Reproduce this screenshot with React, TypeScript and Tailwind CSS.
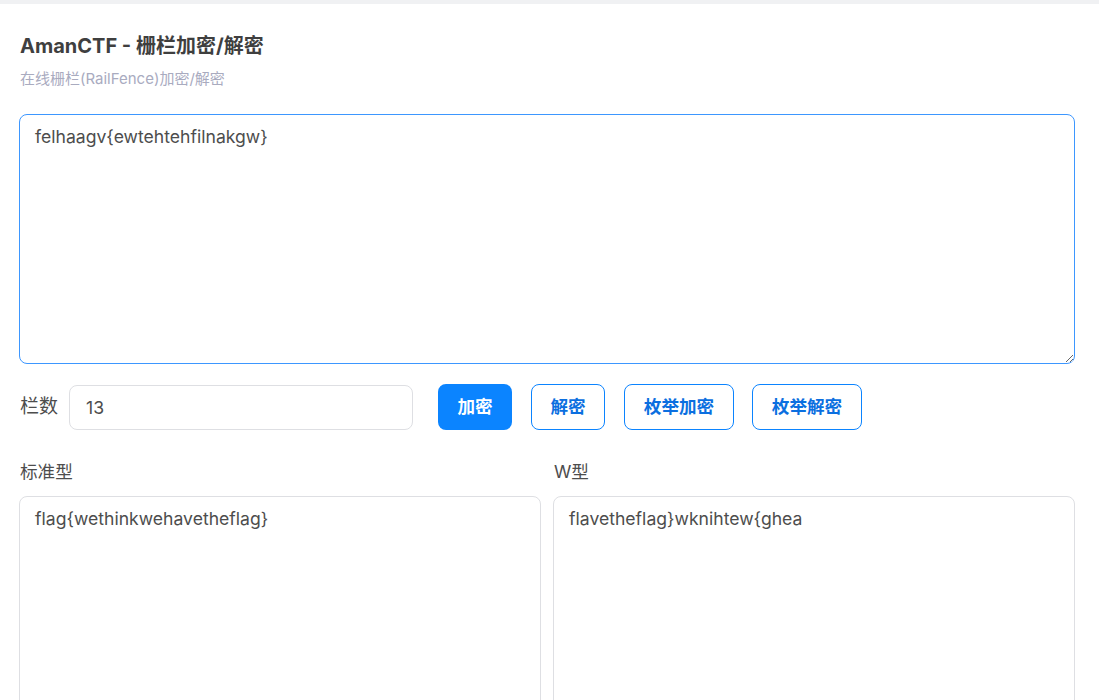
import React, { useState } from "react";

const FONT = { fontFamily: 'Inter, "Noto Sans CJK SC", sans-serif' };

export default function App() {
    const [input, setInput] = useState("felhaagv{ewtehtehfilnakgw}");
    const [rails, setRails] = useState("13");
    const [standard, setStandard] = useState("flag{wethinkwehavetheflag}");
    const [wType, setWType] = useState("flavetheflag}wknihtew{ghea");

    return (
        <div className="min-h-[700px] bg-white" style={FONT}>
            <div className="h-[4px] w-full bg-[#f0f1f3]" />
            <main className="flex flex-col pl-[19px] pr-[24px] pt-[27px]">
                <h1 className="pl-px text-[20px] leading-[30px] font-bold text-[#3f3f3f]">
                    AmanCTF - 栅栏加密/解密
                </h1>
                <p className="mt-[7px] pl-px text-[15px] leading-[22px] text-[#a9abbf]">
                    在线栅栏(RailFence)加密/解密
                </p>

                <textarea
                    value={input}
                    onChange={(e) => setInput(e.target.value)}
                    className="mt-[24px] h-[250px] w-full rounded-lg border border-[#3d97ff] px-[15px] pt-[9px] text-[17.6px] leading-[26px] text-[#4d4d4d] outline-none"
                />

                {/* controls row */}
                <div className="mt-[20px] flex items-center">
                    <span className="pl-px text-[19px] text-[#4d4d4d]">栏数</span>
                    <input
                        value={rails}
                        onChange={(e) => setRails(e.target.value)}
                        className="ml-[11px] h-[45px] w-[344px] rounded-lg border border-[#dedfe3] px-[16px] text-[17.6px] text-[#4d4d4d] outline-none"
                    />
                    <div className="ml-[25px] flex">
                        <button className="h-[46px] w-[74px] rounded-lg bg-[#0b84ff] text-[17.6px] font-bold text-white">
                            加密
                        </button>
                        <button className="ml-[19px] h-[46px] w-[74px] rounded-lg border border-[#0b84ff] bg-white text-[17.6px] font-bold text-[#0b6fe0]">
                            解密
                        </button>
                        <button className="ml-[19px] h-[46px] w-[110px] rounded-lg border border-[#0b84ff] bg-white text-[17.6px] font-bold text-[#0b6fe0]">
                            枚举加密
                        </button>
                        <button className="ml-[18px] h-[46px] w-[110px] rounded-lg border border-[#0b84ff] bg-white text-[17.6px] font-bold text-[#0b6fe0]">
                            枚举解密
                        </button>
                    </div>
                </div>

                {/* results */}
                <div className="mt-[29px] grid grid-cols-2 gap-[12px]">
                    <div className="flex flex-col">
                        <span className="pl-px text-[17.6px] leading-[26px] text-[#4d4d4d]">标准型</span>
                        <textarea
                            value={standard}
                            onChange={(e) => setStandard(e.target.value)}
                            className="mt-[11px] h-[249px] w-full rounded-lg border border-[#dedfe3] px-[15px] pt-[9px] text-[17.6px] leading-[26px] text-[#4d4d4d] outline-none"
                        />
                    </div>
                    <div className="flex flex-col">
                        <span className="pl-px text-[17.6px] leading-[26px] text-[#4d4d4d]">W型</span>
                        <textarea
                            value={wType}
                            onChange={(e) => setWType(e.target.value)}
                            className="mt-[11px] h-[249px] w-full rounded-lg border border-[#dedfe3] px-[15px] pt-[9px] text-[17.6px] leading-[26px] text-[#4d4d4d] outline-none"
                        />
                    </div>
                </div>
            </main>
        </div>
    );
}
